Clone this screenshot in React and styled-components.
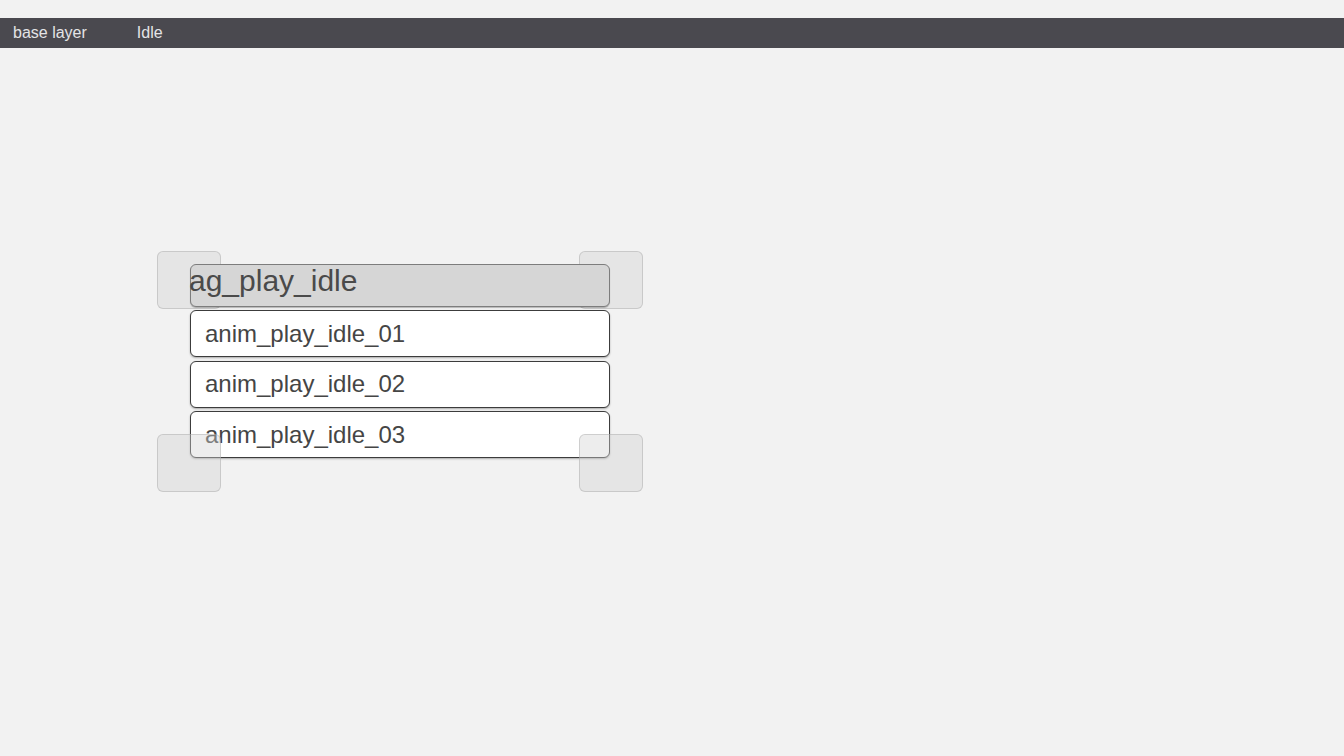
import React from 'react';
import styled, { createGlobalStyle } from 'styled-components';

const GlobalStyle = createGlobalStyle`
  html, body {
    margin: 0;
    padding: 0;
    background: #f2f2f2;
    font-family: 'Liberation Sans', Arial, sans-serif;
  }
  #root {
    min-height: 100vh;
  }
`;

const layer = {
  crumbs: ['base layer', 'Idle'],
  group: 'ag_play_idle',
  clips: ['anim_play_idle_01', 'anim_play_idle_02', 'anim_play_idle_03'],
};

export default function App() {
  return (
    <Page>
      <GlobalStyle />
      <TopBar>
        {layer.crumbs.map(c => (
          <Crumb key={c}>{c}</Crumb>
        ))}
      </TopBar>
      <Canvas>
        <Node>
          <Handle $corner="tl" />
          <Handle $corner="tr" />
          <Header>
            <HeaderLabel>{layer.group}</HeaderLabel>
          </Header>
          <ClipList>
            {layer.clips.map(c => (
              <Clip key={c}>{c}</Clip>
            ))}
          </ClipList>
          <Handle $corner="bl" />
          <Handle $corner="br" />
        </Node>
      </Canvas>
    </Page>
  );
}

const Page = styled('div')`
  min-height: 100vh;
  display: flex;
  flex-direction: column;
  padding-top: 18px;
  box-sizing: border-box;
`;

const TopBar = styled('div')`
  height: 30px;
  background: #4a494f;
  display: flex;
  align-items: center;
  gap: 50px;
  padding-left: 13px;
`;

const Crumb = styled('span')`
  color: #e4e4e6;
  font-size: 16px;
`;

const Canvas = styled('div')`
  position: relative;
  flex: 1;
`;

const Node = styled('div')`
  position: absolute;
  left: 190px;
  top: 216px;
  width: 420px;
  display: flex;
  flex-direction: column;
  gap: 3px;
`;

const Handle = styled('div')`
  position: absolute;
  width: 64px;
  height: 58px;
  box-sizing: border-box;
  border: 1px solid rgba(160, 160, 160, 0.4);
  border-radius: 6px;
  background: rgba(210, 210, 210, 0.4);
  left: ${p => (p.$corner[1] === 'l' ? '-33px' : '389px')};
  top: ${p => (p.$corner[0] === 't' ? '-13px' : '170px')};
  z-index: ${p => (p.$corner[0] === 't' ? 0 : 2)};
`;

const Header = styled('div')`
  position: relative;
  z-index: 1;
  height: 43px;
  box-sizing: border-box;
  background: #d6d6d6;
  border: 1px solid #7d7d7d;
  border-radius: 6px;
  box-shadow: 0 1px 1px rgba(0, 0, 0, 0.25);
`;

const HeaderLabel = styled('div')`
  margin-left: -2px;
  margin-top: -1px;
  font-size: 30px;
  color: #4a4a4a;
  line-height: normal;
  white-space: nowrap;
`;

const ClipList = styled('div')`
  position: relative;
  z-index: 1;
  display: flex;
  flex-direction: column;
  gap: 3.5px;
`;

const Clip = styled('div')`
  height: 47px;
  box-sizing: border-box;
  background: #ffffff;
  border: 1px solid #3c3c3c;
  border-radius: 6px;
  box-shadow: 0 1px 2px rgba(0, 0, 0, 0.3);
  padding-left: 14px;
  display: flex;
  align-items: center;
  font-size: 24px;
  color: #454545;
`;
